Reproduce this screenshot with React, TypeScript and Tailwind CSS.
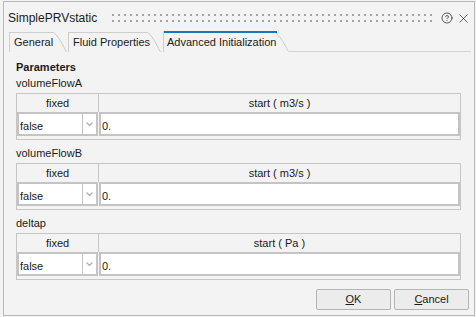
import { CircleHelp, X } from 'lucide-react';

interface ParamProps {
    label: string;
    unit: string;
    first?: boolean;
}

function TabEdge({ height }: { height: number }) {
    return (
        <svg width={13} height={height} className="shrink-0">
            <path d={`M0 0.5 C6 6 9 ${height - 6} 12.5 ${height}`} stroke="#cdcdcd" strokeWidth={1} fill="none" />
        </svg>
    );
}

function ParamBlock({ label, unit, first }: ParamProps) {
    return (
        <div>
            <div className={`${first ? 'mt-0' : 'mt-[5px]'} leading-[16px]`}>{label}</div>
            <div className="mt-[2px] h-[47px] border border-[#c6c6c6] flex flex-col">
                <div className="flex h-[18px] leading-[18px]">
                    <div className="w-[82px] border-r border-[#c6c6c6] text-center">fixed</div>
                    <div className="flex-1 text-center">start ( {unit} )</div>
                </div>
                <div className="flex h-[24px]">
                    <div className="w-[81px] flex border-2 border-[#c4c4c4] bg-white">
                        <div className="flex-1 border-r border-[#c4c4c4] pl-[1px] leading-[22px] pt-[1px]">false</div>
                        <div className="w-[13px] flex items-center justify-center">
                            <svg width={7} height={4}>
                                <path d="M0.5 0.5 L3.5 3.5 L6.5 0.5" stroke="#b0b0b0" strokeWidth={1.2} fill="none" />
                            </svg>
                        </div>
                    </div>
                    <div className="flex-1 ml-[1px] border-2 border-[#c4c4c4] bg-white pl-[1px] leading-[22px] pt-[1px]">0.</div>
                </div>
            </div>
        </div>
    );
}

export default function App() {
    return (
        <div className="w-[476px] h-[317px] bg-[#f3f3f3] pl-[3px] pr-px py-px text-[11px] text-[#1b1b1b] font-['Liberation_Sans',Arial,sans-serif]">
            <div className="h-full border border-[#b8b8b8] flex flex-col">
                {/* title bar */}
                <div className="h-[29px] flex items-center pl-[4px] pr-[3px] pt-[3px]">
                    <span className="text-[12px] leading-[14px]">SimplePRVstatic</span>
                    <svg className="flex-1 ml-[15px] mr-[6px] h-[8px]">
                        <defs>
                            <pattern id="grip" width={6} height={6} patternUnits="userSpaceOnUse">
                                <rect x={0} y={0} width={2} height={2} fill="#a3a3a3" />
                            </pattern>
                        </defs>
                        <rect x={0} y={0} width="100%" height={8} fill="url(#grip)" />
                    </svg>
                    <CircleHelp size={12} strokeWidth={1.6} color="#333" />
                    <X size={15} strokeWidth={1.2} color="#333" className="ml-[3px]" />
                </div>

                {/* tabs */}
                <div className="h-[21px] flex items-end pl-[5px] pr-[3px]">
                    <div className="flex h-[20px]">
                        <div className="w-[45px] border-l border-t border-[#cdcdcd] pl-[4px] leading-[18px] whitespace-nowrap">General</div>
                        <TabEdge height={20} />
                    </div>
                    <div className="flex h-[20px] ml-[1px]">
                        <div className="w-[80px] border-l border-t border-[#cdcdcd] pl-[4px] leading-[18px] whitespace-nowrap">Fluid Properties</div>
                        <TabEdge height={20} />
                    </div>
                    <div className="flex h-[21px] ml-[2px]">
                        <div className="w-[113px] border-l border-[#cdcdcd] relative whitespace-nowrap pl-[3px] pt-[2px] leading-[18px]">
                            <div className="absolute left-0 right-0 top-0 h-[2px] bg-[#1a76b4]" />
                            Advanced Initialization
                        </div>
                        <svg width={13} height={21} className="shrink-0">
                            <path d="M0 1 L1 1" stroke="#1a76b4" strokeWidth={2} />
                            <path d="M0 2 C6 7 9 15 12.5 20.5" stroke="#cdcdcd" strokeWidth={1} fill="none" />
                        </svg>
                    </div>
                    <div className="flex-1 h-full border-b border-[#d2d2d2]" />
                </div>

                {/* page */}
                <div className="pl-[12px] pr-[13px] pt-[7px]">
                    <div className="font-bold leading-[16px]">Parameters</div>
                    <ParamBlock label="volumeFlowA" unit="m3/s" first />
                    <ParamBlock label="volumeFlowB" unit="m3/s" />
                    <ParamBlock label="deltap" unit="Pa" />
                </div>

                {/* buttons */}
                <div className="flex justify-end gap-[3px] mt-[9px] pr-[5px]">
                    <button className="w-[75px] h-[21px] border border-[#b4b4b4] rounded-[2px] bg-[#ececec] leading-[19px]">
                        <span className="underline">O</span>K
                    </button>
                    <button className="w-[75px] h-[21px] border border-[#b4b4b4] rounded-[2px] bg-[#ececec] leading-[19px]">
                        <span className="underline">C</span>ancel
                    </button>
                </div>
            </div>
        </div>
    );
}
